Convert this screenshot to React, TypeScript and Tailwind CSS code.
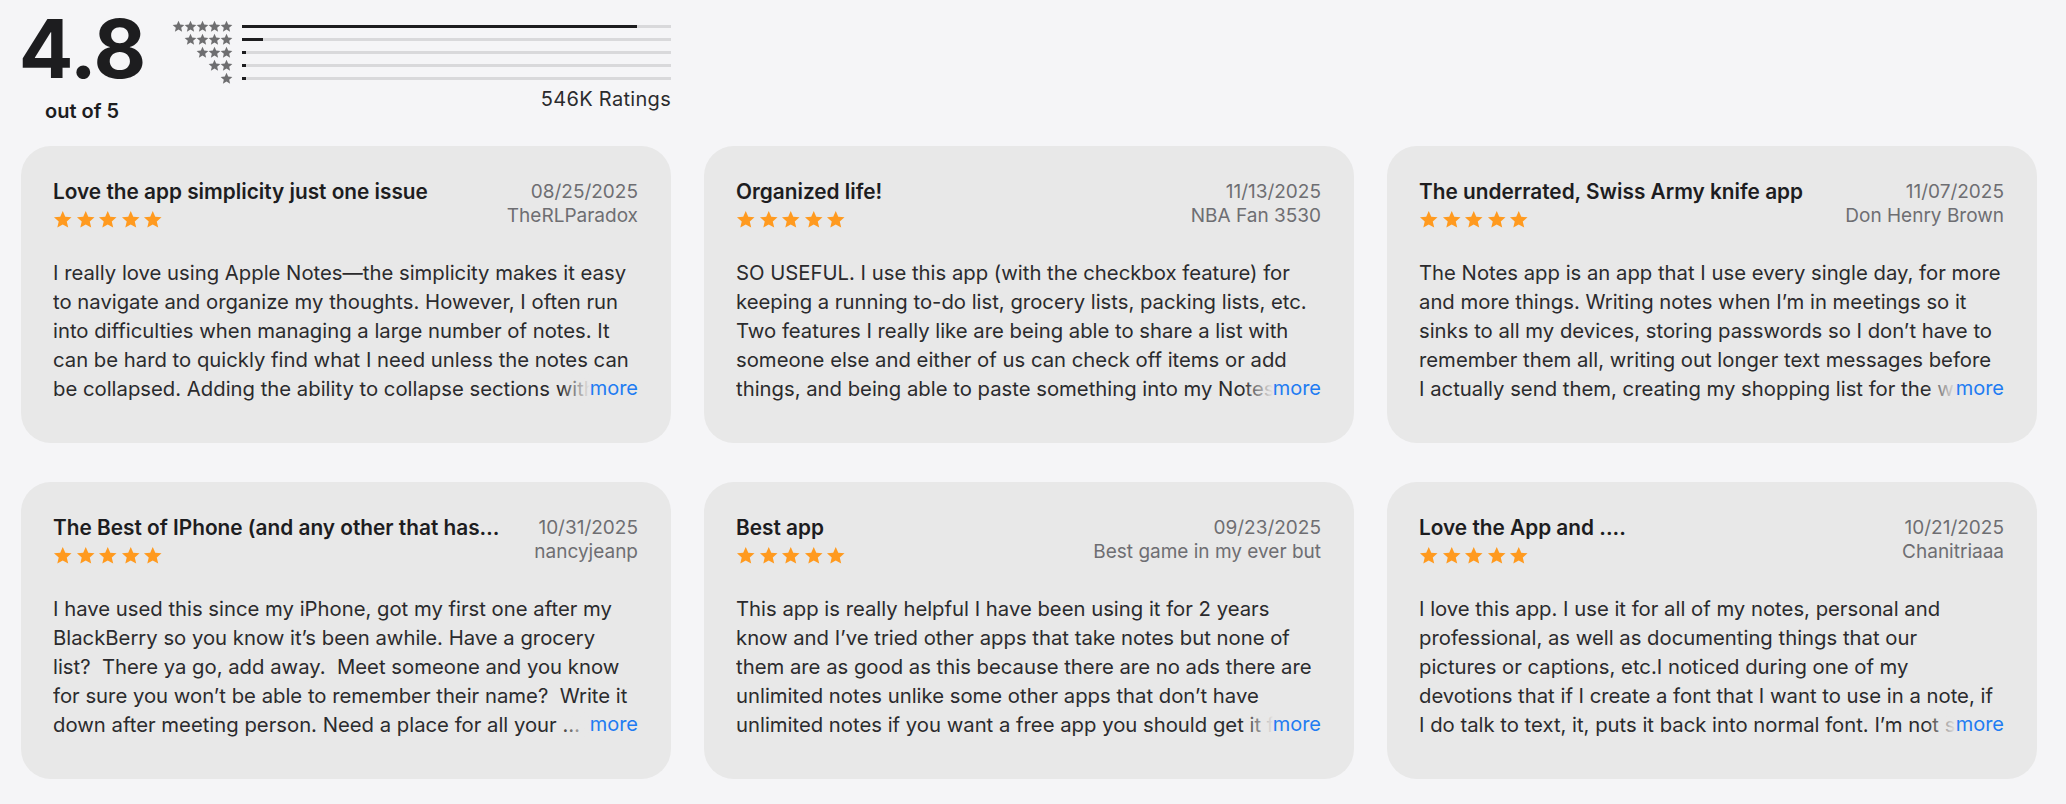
const REVIEWS = [
  {
    title: "Love the app simplicity just one issue",
    date: "08/25/2025",
    author: "TheRLParadox",
    body: "I really love using Apple Notes—the simplicity makes it easy to navigate and organize my thoughts. However, I often run into difficulties when managing a large number of notes. It can be hard to quickly find what I need unless the notes can be collapsed. Adding the ability to collapse sections with headers would make it so much better.",
  },
  {
    title: "Organized life!",
    date: "11/13/2025",
    author: "NBA Fan 3530",
    body: "SO USEFUL. I use this app (with the checkbox feature) for keeping a running to-do list, grocery lists, packing lists, etc. Two features I really like are being able to share a list with someone else and either of us can check off items or add things, and being able to paste something into my Notes app quickly and easily.",
  },
  {
    title: "The underrated, Swiss Army knife app",
    date: "11/07/2025",
    author: "Don Henry Brown",
    body: "The Notes app is an app that I use every single day, for more and more things. Writing notes when I’m in meetings so it sinks to all my devices, storing passwords so I don’t have to remember them all, writing out longer text messages before\nI actually send them, creating my shopping list for the week and much more.",
  },
  {
    title: "The Best of IPhone (and any other that has a notes app)",
    date: "10/31/2025",
    author: "nancyjeanp",
    body: "I have used this since my iPhone, got my first one after my BlackBerry so you know it’s been awhile. Have a grocery list?  There ya go, add away.  Meet someone and you know for sure you won’t be able to remember their name?  Write it down after meeting person. Need a place for all your passwords?  Put them here.",
  },
  {
    title: "Best app",
    date: "09/23/2025",
    author: "Best game in my ever but",
    body: "This app is really helpful I have been using it for 2 years know and I’ve tried other apps that take notes but none of them are as good as this because there are no ads there are unlimited notes unlike some other apps that don’t have unlimited notes if you want a free app you should get it for sure.",
  },
  {
    title: "Love the App and ....",
    date: "10/21/2025",
    author: "Chanitriaaa",
    body: "I love this app. I use it for all of my notes, personal and professional, as well as documenting things that our\npictures or captions, etc.I noticed during one of my devotions that if I create a font that I want to use in a note, if I do talk to text, it, puts it back into normal font. I’m not sure why that happens.",
  },
];

const BARS = [
  { stars: 5, pct: 92 },
  { stars: 4, pct: 5 },
  { stars: 3, pct: 1 },
  { stars: 2, pct: 1 },
  { stars: 1, pct: 1 },
];

const STAR_PATH =
  "M12 1.2l3.1 7.1 7.7.7-5.85 5.1 1.75 7.55L12 17.7l-6.7 3.95 1.75-7.55L1.2 9l7.7-.7L12 1.2z";

function Star({ className }: { className: string }) {
  return (
    <svg viewBox="0 0 24 24" className={className} fill="currentColor">
      <path d={STAR_PATH} />
    </svg>
  );
}

function RatingSummary() {
  return (
    <div className="flex w-[650px] pt-3">
      <div className="flex w-[122px] flex-col items-center">
        <div className="-mt-[3px] text-[81px] font-bold leading-none tracking-[-1px] text-[#1d1d1f]">4.8</div>
        <div className="mt-[9px] text-[20px] font-semibold leading-6 text-[#1d1d1f]">out of 5</div>
      </div>
      <div className="ml-[26px] flex flex-1 flex-col pt-2">
        {BARS.map((b) => (
          <div key={b.stars} className="flex h-[13px] items-center">
            <div className="flex w-[64px] justify-end text-[#6e6e70]">
              {Array.from({ length: b.stars }).map((_, i) => (
                <Star key={i} className="-ml-px h-[13px] w-[13px]" />
              ))}
            </div>
            <div className="ml-[9px] h-[3px] flex-1 bg-[#d9d9db]">
              <div className="h-full min-w-[4px] bg-[#1d1d1f]" style={{ width: `${b.pct}%` }} />
            </div>
          </div>
        ))}
        <div className="mt-[2px] text-right text-[20px] leading-6 tracking-[0.3px] text-[#2b2b2d]">546K Ratings</div>
      </div>
    </div>
  );
}

function ReviewCard({ review }: { review: (typeof REVIEWS)[number] }) {
  return (
    <div className="rounded-[30px] bg-[#e8e8e8] pt-[34px] pr-[33px] pb-10 pl-8">
      <div className="flex justify-between gap-8">
        <div className="min-w-0 flex-1">
          <div className="truncate text-[20.8px] font-semibold leading-6 text-[#1d1d1f]">{review.title}</div>
          <div className="mt-1.5 flex h-5 items-center gap-[3px] text-[#ff9a1f]">
            {[0, 1, 2, 3, 4].map((i) => (
              <Star key={i} className="h-[19.5px] w-[19.5px]" />
            ))}
          </div>
        </div>
        <div className="shrink-0 text-right text-[19px] leading-6 text-[#6e6e72]">
          <div>{review.date}</div>
          <div>{review.author}</div>
        </div>
      </div>
      <div className="relative mt-7">
        <p className="line-clamp-5 whitespace-pre-wrap text-[20.3px] leading-[29px] text-[#2b2b2d]">{review.body}</p>
        <div className="absolute right-0 bottom-0 flex h-[29px] items-center">
          <div className="h-full w-[30px] bg-gradient-to-r from-[#e8e8e800] to-[#e8e8e8]" />
          <span className="bg-[#e8e8e8] text-[20px] leading-[29px] text-[#1f7cf2]">more</span>
        </div>
      </div>
    </div>
  );
}

export default function App() {
  return (
    <div className="min-h-screen bg-[#f5f5f7] pl-[21px] pr-[29px] font-['Inter','Noto_Sans',sans-serif] antialiased">
      <RatingSummary />
      <div className="mt-[23px] grid grid-cols-3 gap-x-[33px] gap-y-[39px]">
        {REVIEWS.map((r) => (
          <ReviewCard key={r.date + r.author} review={r} />
        ))}
      </div>
    </div>
  );
}
